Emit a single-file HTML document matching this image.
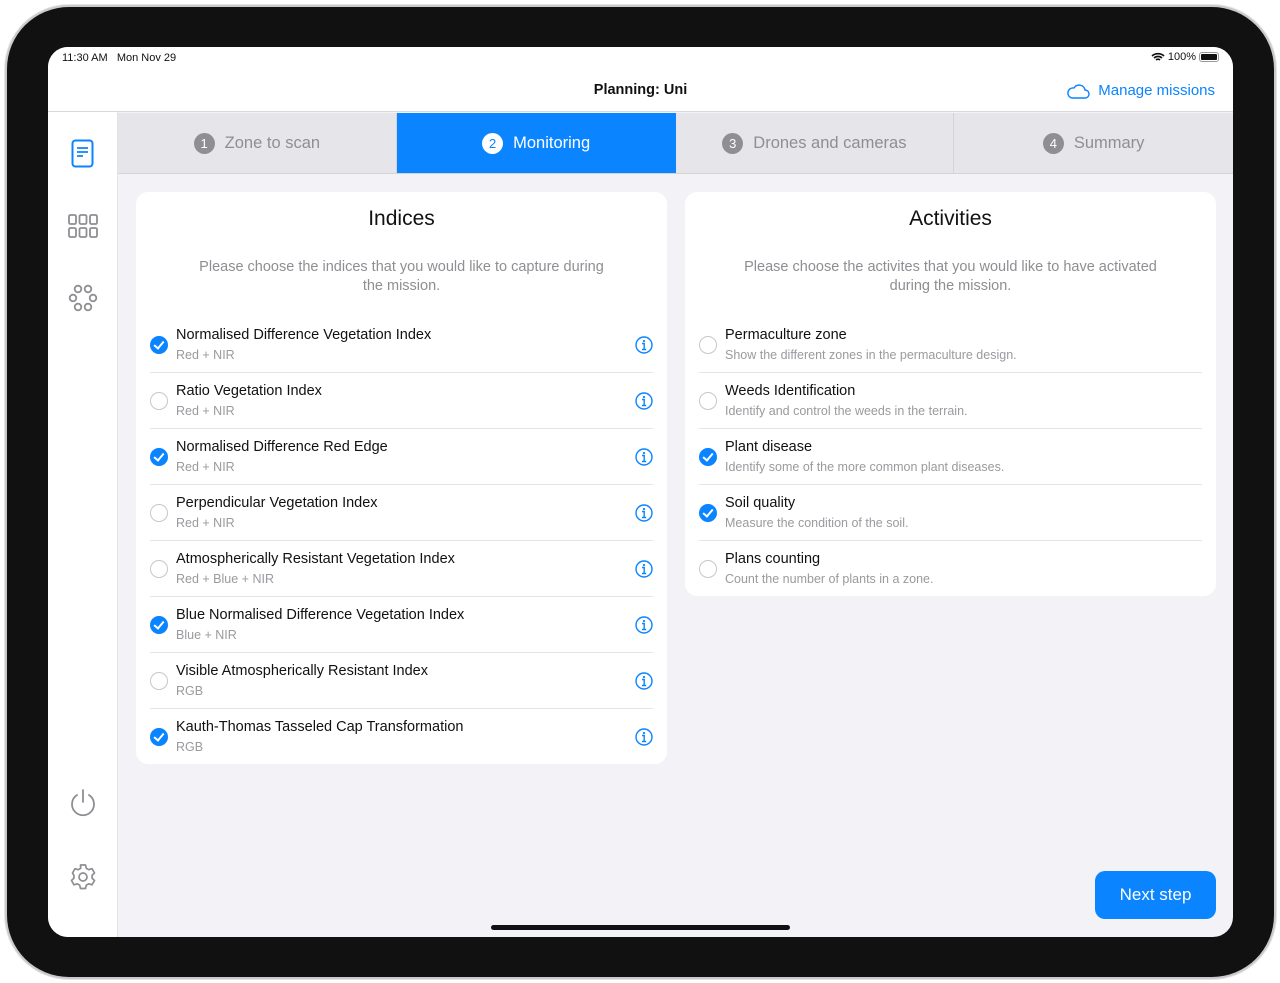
<!DOCTYPE html><html><head><meta charset="utf-8"><style>
*{margin:0;padding:0;box-sizing:border-box}
body{width:1280px;height:983px;background:#fff;font-family:"Liberation Sans",sans-serif;position:relative;overflow:hidden}
.dev{position:absolute;left:7px;top:7px;width:1267px;height:970px;border-radius:62px;background:#111;box-shadow:0 0 0 2px #c9c9cc,0 0 0 3px #e5e5e7}
.scr{position:absolute;left:48px;top:47px;width:1185px;height:890px;border-radius:20px;background:#f2f2f7;overflow:hidden}
.sb{position:absolute;left:0;top:0;width:1185px;height:65px;background:#fff;border-bottom:1px solid #d8d8dc}
.side{position:absolute;left:0;top:65px;width:70px;height:825px;background:#fff;border-right:1px solid #e2e2e6}
.tabs{position:absolute;left:70px;top:66px;width:1115px;height:61px;background:#e5e5ea;border-bottom:1px solid #d4d4d8;display:flex}
.tab{width:279px;display:flex;align-items:center;justify-content:center;color:#8e8e93;font-size:16.5px;border-right:1px solid #d4d4d8}
.tab b{display:inline-block;width:21px;height:21px;border-radius:50%;background:#8e8e93;color:#fff;font-size:13px;font-weight:normal;text-align:center;line-height:21px;margin-right:10px}
.tab.on{background:#0a84ff;color:#fff;border-right:none}
.tab.on b{background:#fff;color:#0a84ff}
.card{position:absolute;background:#fff;border-radius:12px}
.card h2{font-weight:normal;font-size:21px;text-align:center;margin-top:15px;color:#111}
.card p.d{font-size:14.5px;color:#8e8e93;text-align:center;line-height:19px;margin:27px 60px 0}
.rows{position:absolute;left:14px;right:14px;top:125px}
.row{height:56px;position:relative;border-bottom:1px solid #e4e4e8}
.row:last-child{border-bottom:none}
.row .t{position:absolute;left:26px;top:10px;font-size:14.5px;color:#111}
.row .s{position:absolute;left:26px;top:31px;font-size:12.5px;color:#9a9a9f}
.ck{position:absolute;left:0;top:19px;width:18px;height:18px;border-radius:50%;border:1.5px solid #c7c7cc}
.ck.on{background:#0a84ff;border-color:#0a84ff}
.ck.on:after{content:"";position:absolute;left:5px;top:2px;width:4px;height:8px;border:solid #fff;border-width:0 2px 2px 0;transform:rotate(40deg)}
.inf{position:absolute;right:0;top:19px}
</style></head><body>
<div class="dev"></div>
<div class="scr">
 <div class="sb">
  <div style="position:absolute;left:14px;top:5px;font-size:11px;color:#111">11:30 AM&nbsp;&nbsp;&nbsp;Mon Nov 29</div>
  <div style="position:absolute;right:14px;top:4px;font-size:11px;color:#111;display:flex;align-items:center;gap:3px">
   <svg width="14" height="10" viewBox="0 0 14 10"><path d="M1 4a9 9 0 0 1 12 0M3 6a6 6 0 0 1 8 0M5 8a3 3 0 0 1 4 0" stroke="#111" stroke-width="1.6" fill="none"/></svg>100%
   <span style="display:inline-block;width:20px;height:10px;border:1px solid #999;border-radius:3px;padding:1px"><span style="display:block;height:100%;background:#111;border-radius:1px"></span></span></div>
  <div style="position:absolute;left:0;right:0;top:35px;text-align:center;font-size:14.5px;font-weight:bold;color:#111">Planning: Uni</div>
  <div style="position:absolute;right:18px;top:35px;font-size:15px;color:#0a84ff;display:flex;align-items:center;gap:8px">
   <svg width="24" height="16" viewBox="0 0 24 16"><path d="M6 15h13a4 4 0 0 0 0-8 6 6 0 0 0-11-2A5 5 0 0 0 6 15z" stroke="#0a84ff" stroke-width="1.4" fill="none"/></svg>Manage missions</div>
 </div>
 <div class="side">
  <svg style="position:absolute;left:23px;top:27px" width="24" height="30" viewBox="0 0 24 30"><rect x="1.5" y="1.5" width="20" height="26" rx="3" stroke="#0a84ff" stroke-width="2" fill="none"/><path d="M6 9h11M6 13h11M6 17h6" stroke="#0a84ff" stroke-width="1.8"/></svg>
  <svg style="position:absolute;left:20px;top:102px" width="30" height="24" viewBox="0 0 30 24"><g stroke="#8e8e93" stroke-width="1.8" fill="none"><rect x="1" y="1" width="7" height="9" rx="1.5"/><rect x="11.5" y="1" width="7" height="9" rx="1.5"/><rect x="22" y="1" width="7" height="9" rx="1.5"/><rect x="1" y="14" width="7" height="9" rx="1.5"/><rect x="11.5" y="14" width="7" height="9" rx="1.5"/><rect x="22" y="14" width="7" height="9" rx="1.5"/></g></svg>
  <svg style="position:absolute;left:20px;top:172px" width="30" height="28" viewBox="0 0 30 28"><g stroke="#8e8e93" stroke-width="1.8" fill="none"><circle cx="10" cy="5" r="3.3"/><circle cx="20" cy="5" r="3.3"/><circle cx="5" cy="14" r="3.3"/><circle cx="25" cy="14" r="3.3"/><circle cx="10" cy="23" r="3.3"/><circle cx="20" cy="23" r="3.3"/></g></svg>
  <svg style="position:absolute;left:21px;top:677px" width="28" height="28" viewBox="0 0 28 28"><path d="M8 6a11 11 0 1 0 12 0M14 1v12" stroke="#8e8e93" stroke-width="1.8" fill="none" stroke-linecap="round"/></svg>
  <svg style="position:absolute;left:21px;top:751px" width="28" height="28" viewBox="0 0 28 28"><g stroke="#8e8e93" stroke-width="1.7" fill="none"><path d="M11.5 2h5l.8 3.3 2.5 1.4 3.2-1 2.5 4.3-2.4 2.3v2.9l2.4 2.3-2.5 4.3-3.2-1-2.5 1.4-.8 3.3h-5l-.8-3.3-2.5-1.4-3.2 1-2.5-4.3 2.4-2.3v-2.9L3.5 10l2.5-4.3 3.2 1 2.5-1.4z" stroke-linejoin="round"/><circle cx="14" cy="14" r="4"/></g></svg>
 </div>
 <div class="tabs">
  <div class="tab"><b>1</b>Zone to scan</div>
  <div class="tab on"><b>2</b>Monitoring</div>
  <div class="tab"><b>3</b>Drones and cameras</div>
  <div class="tab" style="border-right:none"><b>4</b>Summary</div>
 </div>
 <div class="card" style="left:88px;top:145px;width:531px;height:572px">
  <h2>Indices</h2>
  <p class="d">Please choose the indices that you would like to capture during the mission.</p>
  <div class="rows">
   <div class="row"><div class="ck on"></div><div class="t">Normalised Difference Vegetation Index</div><div class="s">Red + NIR</div><svg class="inf" width="18" height="18" viewBox="0 0 18 18"><circle cx="9" cy="9" r="8" stroke="#0a84ff" stroke-width="1.4" fill="none"/><circle cx="9" cy="5" r="1.1" fill="#0a84ff"/><path d="M7 7.5h2.2v6M7 13.5h4.2" stroke="#0a84ff" stroke-width="1.4" fill="none"/></svg></div>
   <div class="row"><div class="ck"></div><div class="t">Ratio Vegetation Index</div><div class="s">Red + NIR</div><svg class="inf" width="18" height="18" viewBox="0 0 18 18"><circle cx="9" cy="9" r="8" stroke="#0a84ff" stroke-width="1.4" fill="none"/><circle cx="9" cy="5" r="1.1" fill="#0a84ff"/><path d="M7 7.5h2.2v6M7 13.5h4.2" stroke="#0a84ff" stroke-width="1.4" fill="none"/></svg></div>
   <div class="row"><div class="ck on"></div><div class="t">Normalised Difference Red Edge</div><div class="s">Red + NIR</div><svg class="inf" width="18" height="18" viewBox="0 0 18 18"><circle cx="9" cy="9" r="8" stroke="#0a84ff" stroke-width="1.4" fill="none"/><circle cx="9" cy="5" r="1.1" fill="#0a84ff"/><path d="M7 7.5h2.2v6M7 13.5h4.2" stroke="#0a84ff" stroke-width="1.4" fill="none"/></svg></div>
   <div class="row"><div class="ck"></div><div class="t">Perpendicular Vegetation Index</div><div class="s">Red + NIR</div><svg class="inf" width="18" height="18" viewBox="0 0 18 18"><circle cx="9" cy="9" r="8" stroke="#0a84ff" stroke-width="1.4" fill="none"/><circle cx="9" cy="5" r="1.1" fill="#0a84ff"/><path d="M7 7.5h2.2v6M7 13.5h4.2" stroke="#0a84ff" stroke-width="1.4" fill="none"/></svg></div>
   <div class="row"><div class="ck"></div><div class="t">Atmospherically Resistant Vegetation Index</div><div class="s">Red + Blue + NIR</div><svg class="inf" width="18" height="18" viewBox="0 0 18 18"><circle cx="9" cy="9" r="8" stroke="#0a84ff" stroke-width="1.4" fill="none"/><circle cx="9" cy="5" r="1.1" fill="#0a84ff"/><path d="M7 7.5h2.2v6M7 13.5h4.2" stroke="#0a84ff" stroke-width="1.4" fill="none"/></svg></div>
   <div class="row"><div class="ck on"></div><div class="t">Blue Normalised Difference Vegetation Index</div><div class="s">Blue + NIR</div><svg class="inf" width="18" height="18" viewBox="0 0 18 18"><circle cx="9" cy="9" r="8" stroke="#0a84ff" stroke-width="1.4" fill="none"/><circle cx="9" cy="5" r="1.1" fill="#0a84ff"/><path d="M7 7.5h2.2v6M7 13.5h4.2" stroke="#0a84ff" stroke-width="1.4" fill="none"/></svg></div>
   <div class="row"><div class="ck"></div><div class="t">Visible Atmospherically Resistant Index</div><div class="s">RGB</div><svg class="inf" width="18" height="18" viewBox="0 0 18 18"><circle cx="9" cy="9" r="8" stroke="#0a84ff" stroke-width="1.4" fill="none"/><circle cx="9" cy="5" r="1.1" fill="#0a84ff"/><path d="M7 7.5h2.2v6M7 13.5h4.2" stroke="#0a84ff" stroke-width="1.4" fill="none"/></svg></div>
   <div class="row"><div class="ck on"></div><div class="t">Kauth-Thomas Tasseled Cap Transformation</div><div class="s">RGB</div><svg class="inf" width="18" height="18" viewBox="0 0 18 18"><circle cx="9" cy="9" r="8" stroke="#0a84ff" stroke-width="1.4" fill="none"/><circle cx="9" cy="5" r="1.1" fill="#0a84ff"/><path d="M7 7.5h2.2v6M7 13.5h4.2" stroke="#0a84ff" stroke-width="1.4" fill="none"/></svg></div>
  </div>
 </div>
 <div class="card" style="left:637px;top:145px;width:531px;height:404px">
  <h2>Activities</h2>
  <p class="d" style="margin-left:45px;margin-right:45px">Please choose the activites that you would like to have activated during the mission.</p>
  <div class="rows">
   <div class="row"><div class="ck"></div><div class="t">Permaculture zone</div><div class="s">Show the different zones in the permaculture design.</div></div>
   <div class="row"><div class="ck"></div><div class="t">Weeds Identification</div><div class="s">Identify and control the weeds in the terrain.</div></div>
   <div class="row"><div class="ck on"></div><div class="t">Plant disease</div><div class="s">Identify some of the more common plant diseases.</div></div>
   <div class="row"><div class="ck on"></div><div class="t">Soil quality</div><div class="s">Measure the condition of the soil.</div></div>
   <div class="row"><div class="ck"></div><div class="t">Plans counting</div><div class="s">Count the number of plants in a zone.</div></div>
  </div>
 </div>
 <div style="position:absolute;left:1047px;top:824px;width:121px;height:48px;border-radius:10px;background:#0a84ff;color:#fff;font-size:17px;text-align:center;line-height:48px">Next step</div>
 <div style="position:absolute;left:443px;top:878px;width:299px;height:5px;border-radius:3px;background:#111"></div>
</div>
</body></html>
